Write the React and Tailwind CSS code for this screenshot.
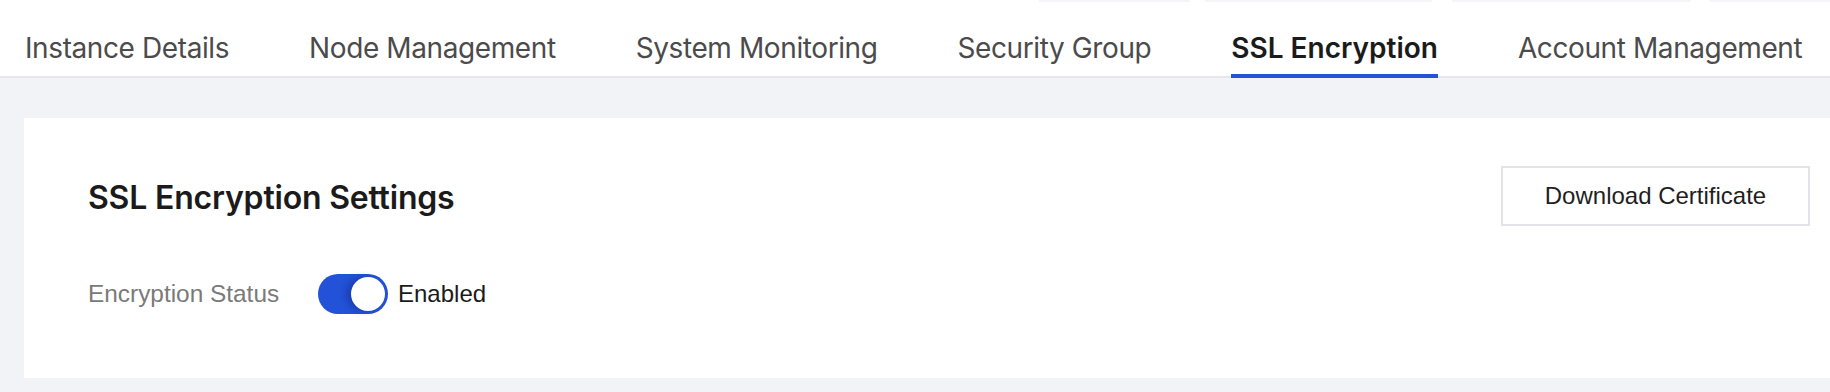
import React from 'react';

const tabs = [
  { label: 'Instance Details' },
  { label: 'Node Management' },
  { label: 'System Monitoring' },
  { label: 'Security Group' },
  { label: 'SSL Encryption', active: true },
  { label: 'Account Management' },
];

const Toggle = () => (
  <div className="w-[70px] h-[40px] rounded-full bg-[#2352d8] p-[3px] flex justify-end">
    <div className="w-[34px] h-[34px] rounded-full bg-white shadow-[-5px_0_6px_rgba(10,30,110,0.35)]" />
  </div>
);

const App = () => {
  return (
    <div className="w-full h-[392px] overflow-hidden bg-[#f2f3f7] font-['Inter',sans-serif]">
      <header className="bg-white border-b-2 border-[#e6e7ec]">
        {/* faint edges of the row above */}
        <div className="flex h-[2px]">
          <div className="ml-[1039px] w-[151px] bg-[#f4f5f8]" />
          <div className="ml-[15px] w-[227px] bg-[#f4f5f8]" />
          <div className="ml-[20px] w-[238px] bg-[#f4f5f8]" />
          <div className="ml-[20px] flex-1 bg-[#f4f5f8]" />
        </div>
        <nav className="flex h-[74px] gap-[80px] pl-[25px] whitespace-nowrap">
          {tabs.map((tab) => (
            <div
              key={tab.label}
              className={`shrink-0 flex items-end pb-[9px] -mb-[2px] border-b-4 text-[28px] leading-[34px] ${
                tab.active
                  ? 'border-[#2452d6] text-[#1b1b1b] font-semibold'
                  : 'border-transparent text-[#4b4b4b] tracking-[-0.4px]'
              }`}
            >
              {tab.label}
            </div>
          ))}
        </nav>
      </header>

      <section className="mt-[40px] ml-[24px] mr-[-44px] bg-white pl-[64px] pr-[64px] pt-[48px] pb-[64px]">
        <div className="flex items-center justify-between h-[60px]">
          <h2 className="text-[32px] leading-[39px] font-semibold text-[#1b1b1b] tracking-[-0.2px] translate-y-[1px]">
            SSL Encryption Settings
          </h2>
          <button className="w-[309px] h-[60px] border-2 border-[#e3e4ea] bg-white text-[24px] text-[#1f1f1f] font-['Liberation_Sans',sans-serif]">
            Download Certificate
          </button>
        </div>
        <div className="mt-[48px] flex items-center h-[40px] font-['Liberation_Sans',sans-serif] text-[24px]">
          <span className="w-[230px] text-[24.4px] text-[#7a7a7a]">Encryption Status</span>
          <Toggle />
          <span className="ml-[10px] text-[#1b1b1b]">Enabled</span>
        </div>
      </section>
    </div>
  );
};

export default App;
